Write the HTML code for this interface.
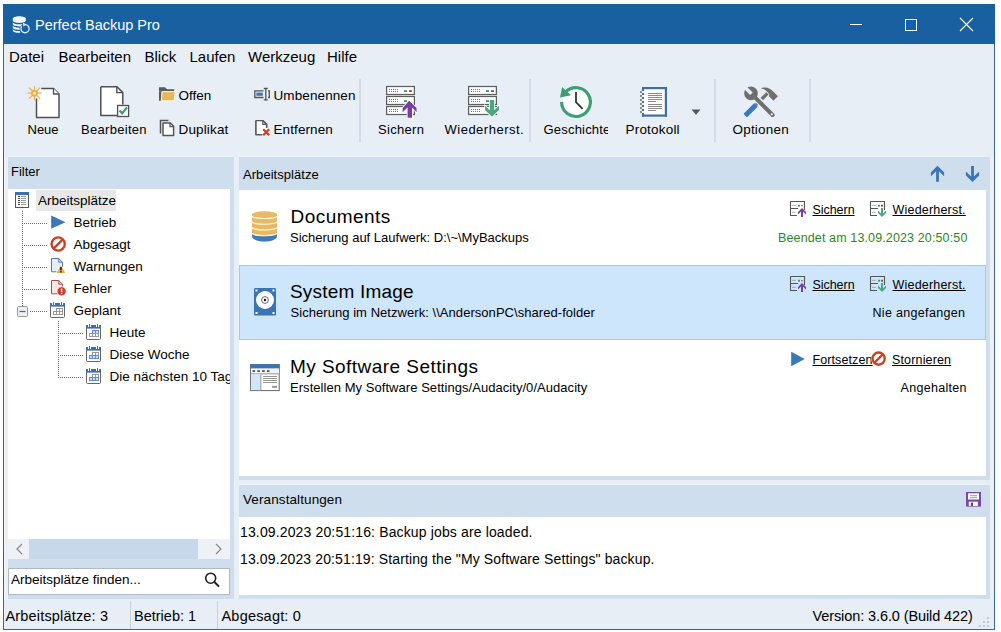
<!DOCTYPE html>
<html><head><meta charset="utf-8"><style>
html,body{margin:0;padding:0;width:1001px;height:632px;overflow:hidden;background:#fff}
body{position:relative;font-family:"Liberation Sans",sans-serif}
.t{position:absolute;white-space:nowrap;line-height:1}
.r{position:absolute;display:block}
u{text-decoration:underline;text-decoration-thickness:1px;text-underline-offset:1px}
</style></head><body>
<div class="r" style="left:3px;top:4px;width:992px;height:626px;background:#33699a;"></div>
<div class="r" style="left:3px;top:4px;width:992px;height:40px;background:#1860a0;"></div>
<div class="r" style="left:4px;top:44px;width:990px;height:585px;background:#e7eef6;"></div>
<div class="r" style="left:4px;top:157px;width:4px;height:442px;background:#eef0f3;"></div>
<div class="r" style="left:990px;top:157px;width:4px;height:442px;background:#eef0f3;"></div>
<svg class="r" style="left:11px;top:14px;" width="20" height="20" viewBox="0 0 20 20">
<path d="M1.8 4.6C1.8 3.2 4.7 2.2 8.3 2.2S14.8 3.2 14.8 4.6V6.6C14.8 8 11.9 9 8.3 9S1.8 8 1.8 6.6Z" fill="#f2f8ff"/>
<path d="M1.8 7.9C1.8 9.3 4.7 10.2 8.3 10.2C9.5 10.2 10.6 10.1 11.6 9.9L9.6 12.4C9.2 12.5 8.7 12.5 8.3 12.5C4.7 12.5 1.8 11.5 1.8 10.1Z" fill="#f2f8ff"/>
<path d="M1.8 11.3C1.8 12.7 4.7 13.7 8.3 13.7L8.6 13.7C8.5 14.3 8.5 15.2 8.6 15.9L8.3 15.9C4.7 15.9 1.8 14.9 1.8 13.5Z" fill="#f2f8ff"/>
<path d="M1.8 14.7C1.8 16.1 4.7 17.1 8.3 17.1L9 17.1L9.4 18.7C9 18.8 8.7 18.8 8.3 18.8C4.7 18.8 1.8 17.8 1.8 16.4Z" fill="#f2f8ff"/>
<path d="M14.6 10.6A4.1 4.1 0 1 1 10.6 12.4" fill="none" stroke="#d4eaff" stroke-width="1.3"/>
<path d="M11.8 8.6L15.6 10.6L12.4 12.6Z" fill="#d4eaff"/>
</svg>
<div class="t" style="left:35px;top:18px;font-size:14.5px;color:#fff;">Perfect Backup Pro</div>
<div class="r" style="left:850px;top:24px;width:12px;height:1px;background:#fff;"></div>
<svg class="r" style="left:904px;top:18px;" width="14" height="14" viewBox="0 0 14 14"><rect x="1.5" y="1.5" width="11" height="11" fill="none" stroke="#fff" stroke-width="1"/></svg>
<svg class="r" style="left:959px;top:17px;" width="15" height="15" viewBox="0 0 15 15"><path d="M1 1L14 14M14 1L1 14" stroke="#fff" stroke-width="1.1"/></svg>
<div class="t" style="left:9px;top:49px;font-size:15px;color:#000;">Datei</div>
<div class="t" style="left:58.5px;top:49px;font-size:15px;color:#000;">Bearbeiten</div>
<div class="t" style="left:144.5px;top:49px;font-size:15px;color:#000;">Blick</div>
<div class="t" style="left:189.5px;top:49px;font-size:15px;color:#000;">Laufen</div>
<div class="t" style="left:248px;top:49px;font-size:15px;color:#000;">Werkzeug</div>
<div class="t" style="left:327px;top:49px;font-size:15px;color:#000;">Hilfe</div>
<div class="r" style="left:359px;top:79px;width:2px;height:63px;background:#d2dce8;"></div>
<div class="r" style="left:529px;top:79px;width:2px;height:63px;background:#d2dce8;"></div>
<div class="r" style="left:714px;top:79px;width:2px;height:63px;background:#d2dce8;"></div>
<div class="r" style="left:809px;top:79px;width:2px;height:63px;background:#d2dce8;"></div>
<svg class="r" style="left:26px;top:84px;" width="36" height="36" viewBox="0 0 36 36">
<path d="M10.5 4.5H27.5L33 10V33.5H10.5Z" fill="#fff"/>
<path d="M15.2 4.5H27.5L33 10V33.5H10.5V14.6" fill="none" stroke="#505050" stroke-width="1.5" stroke-linejoin="round"/>
<path d="M27.5 4.5V10H33" fill="#fff" stroke="#505050" stroke-width="1.3"/>
<g stroke="#eeae4a" stroke-width="1.2" stroke-linecap="round">
<path d="M8.5 2.6V15.8M1.9 9.2H15.1M3.3 4L13.7 14.4M13.7 4L3.3 14.4"/>
</g>
<circle cx="8.5" cy="9.2" r="3.4" fill="#efae48"/><circle cx="8.5" cy="9.2" r="1.5" fill="#ffe8b8"/>
</svg>
<div class="t" style="left:27.5px;top:123px;font-size:13px;color:#000;">Neue</div>
<svg class="r" style="left:96px;top:82px;" width="36" height="38" viewBox="0 0 36 38">
<path d="M4.8 4.8H21L26.8 10.6V22H22V33.5H4.8Z" fill="#fff"/>
<path d="M4.8 4.8H21L26.8 10.6V22.5M21 33.5H4.8V4.8" fill="none" stroke="#505050" stroke-width="1.5" stroke-linejoin="round"/>
<path d="M20.8 4.8V10.6H26.8" fill="none" stroke="#505050" stroke-width="1.4"/>
<rect x="21.6" y="23.5" width="11" height="11" fill="#fff" stroke="#505050" stroke-width="1.3"/>
<path d="M23.5 28.5L26.2 31.4L31 25.4" fill="none" stroke="#3a9a6a" stroke-width="2.2"/>
</svg>
<div class="t" style="left:81px;top:123px;font-size:13px;color:#000;letter-spacing:0.3px">Bearbeiten</div>
<svg class="r" style="left:157px;top:85px;" width="20" height="18" viewBox="0 0 20 18">
<path d="M2 2.2H8L10 4.2H17.2V6.8H2Z" fill="#5b5b5b"/>
<path d="M2 2.2V15.8H4.5V6.8H2Z" fill="#5b5b5b"/>
<path d="M5.2 6.6H18.2L17.2 15.8H4.2Z" fill="#e9b55e" stroke="#fff" stroke-width="0.9"/>
</svg>
<div class="t" style="left:178.5px;top:89px;font-size:13.5px;color:#000;">Offen</div>
<svg class="r" style="left:157px;top:117px;" width="20" height="21" viewBox="0 0 20 21">
<path d="M3.5 16.5V3.5H11.5" fill="none" stroke="#555" stroke-width="1.5"/>
<path d="M6 6H13.3L16.6 9.3V18.6H6Z" fill="#fff" stroke="#555" stroke-width="1.5" stroke-linejoin="round"/>
<path d="M13 6V9.6H16.6" fill="none" stroke="#555" stroke-width="1.3"/>
</svg>
<div class="t" style="left:178.5px;top:123px;font-size:13.5px;color:#000;letter-spacing:0.15px">Duplikat</div>
<svg class="r" style="left:252px;top:86px;" width="20" height="16" viewBox="0 0 20 16">
<path d="M11.5 4.8H2.8V11.5H11.5" fill="none" stroke="#555" stroke-width="1.3"/>
<rect x="4.4" y="6.6" width="6.4" height="3.2" fill="#3d74b4"/>
<path d="M13.8 2.5V13.8M11.8 2.5H15.8M11.8 13.8H15.8" stroke="#555" stroke-width="1.3"/>
<path d="M16 4.8H17.3V11.5H16" fill="none" stroke="#555" stroke-width="1.3"/>
</svg>
<div class="t" style="left:273.5px;top:89px;font-size:13.5px;color:#000;letter-spacing:0.1px">Umbenennen</div>
<svg class="r" style="left:253px;top:118px;" width="20" height="20" viewBox="0 0 20 20">
<path d="M3 2.6H9.8L13.6 6.4V9.5M9 16.6H3V2.6" fill="#fff" stroke="#555" stroke-width="1.4" stroke-linejoin="round"/>
<path d="M3 2.6H9.8L13.6 6.4V16.6H3Z" fill="#fff"/>
<path d="M3 2.6H9.8L13.6 6.4V10M9.5 16.6H3V2.6" fill="none" stroke="#555" stroke-width="1.4"/>
<path d="M9.8 2.6V6.4H13.6" fill="none" stroke="#555" stroke-width="1.2"/>
<path d="M10.2 11.2L16.2 17.2M16.2 11.2L10.2 17.2" stroke="#fff" stroke-width="3.4"/><path d="M10.2 11.2L16.2 17.2M16.2 11.2L10.2 17.2" stroke="#cc3a20" stroke-width="2.2"/>
</svg>
<div class="t" style="left:273.5px;top:123px;font-size:13.5px;color:#000;letter-spacing:0.1px">Entfernen</div>
<svg class="r" style="left:382px;top:82px;" width="38" height="38" viewBox="0 0 38 38"><rect x="4.6" y="4.5" width="27.8" height="8" fill="#fff" stroke="#5f5f5f" stroke-width="1.25"/><rect x="7" y="7" width="1" height="1" fill="#777"/><rect x="9" y="7" width="1" height="1" fill="#777"/><rect x="11" y="7" width="1" height="1" fill="#777"/><rect x="13" y="7" width="1" height="1" fill="#777"/><rect x="15" y="7" width="1" height="1" fill="#777"/><rect x="7" y="9" width="1" height="1" fill="#777"/><rect x="9" y="9" width="1" height="1" fill="#777"/><rect x="11" y="9" width="1" height="1" fill="#777"/><rect x="13" y="9" width="1" height="1" fill="#777"/><rect x="15" y="9" width="1" height="1" fill="#777"/><rect x="4.6" y="14.5" width="27.8" height="8" fill="#fff" stroke="#5f5f5f" stroke-width="1.25"/><rect x="7" y="17" width="1" height="1" fill="#777"/><rect x="9" y="17" width="1" height="1" fill="#777"/><rect x="11" y="17" width="1" height="1" fill="#777"/><rect x="13" y="17" width="1" height="1" fill="#777"/><rect x="15" y="17" width="1" height="1" fill="#777"/><rect x="7" y="19" width="1" height="1" fill="#777"/><rect x="9" y="19" width="1" height="1" fill="#777"/><rect x="11" y="19" width="1" height="1" fill="#777"/><rect x="13" y="19" width="1" height="1" fill="#777"/><rect x="15" y="19" width="1" height="1" fill="#777"/><rect x="4.6" y="24.5" width="27.8" height="8" fill="#fff" stroke="#5f5f5f" stroke-width="1.25"/><rect x="7" y="27" width="1" height="1" fill="#777"/><rect x="9" y="27" width="1" height="1" fill="#777"/><rect x="11" y="27" width="1" height="1" fill="#777"/><rect x="13" y="27" width="1" height="1" fill="#777"/><rect x="15" y="27" width="1" height="1" fill="#777"/><rect x="7" y="29" width="1" height="1" fill="#777"/><rect x="9" y="29" width="1" height="1" fill="#777"/><rect x="11" y="29" width="1" height="1" fill="#777"/><rect x="13" y="29" width="1" height="1" fill="#777"/><rect x="15" y="29" width="1" height="1" fill="#777"/><rect x="22" y="8.2" width="3" height="1.8" fill="#3a9a6a"/><rect x="27" y="8.2" width="3" height="1.8" fill="#c2402a"/><rect x="22" y="18.2" width="3" height="1.8" fill="#3a9a6a"/><path d="M27.1 18.8L34.6 26V30.2L30 25.6V35.8H25.6V25.6L20.6 30.2V26Z" fill="#fff" stroke="#fff" stroke-width="1.6"/><path d="M27.1 18.8L34.6 26V30.2L30 25.6V35.8H25.6V25.6L20.6 30.2V26Z" fill="#7a3ea3"/></svg>
<div class="t" style="left:378px;top:123px;font-size:13px;color:#000;letter-spacing:0.3px">Sichern</div>
<svg class="r" style="left:464px;top:82px;" width="38" height="38" viewBox="0 0 38 38"><rect x="4.6" y="4.5" width="27.8" height="8" fill="#fff" stroke="#5f5f5f" stroke-width="1.25"/><rect x="7" y="7" width="1" height="1" fill="#777"/><rect x="9" y="7" width="1" height="1" fill="#777"/><rect x="11" y="7" width="1" height="1" fill="#777"/><rect x="13" y="7" width="1" height="1" fill="#777"/><rect x="15" y="7" width="1" height="1" fill="#777"/><rect x="7" y="9" width="1" height="1" fill="#777"/><rect x="9" y="9" width="1" height="1" fill="#777"/><rect x="11" y="9" width="1" height="1" fill="#777"/><rect x="13" y="9" width="1" height="1" fill="#777"/><rect x="15" y="9" width="1" height="1" fill="#777"/><rect x="4.6" y="14.5" width="27.8" height="8" fill="#fff" stroke="#5f5f5f" stroke-width="1.25"/><rect x="7" y="17" width="1" height="1" fill="#777"/><rect x="9" y="17" width="1" height="1" fill="#777"/><rect x="11" y="17" width="1" height="1" fill="#777"/><rect x="13" y="17" width="1" height="1" fill="#777"/><rect x="15" y="17" width="1" height="1" fill="#777"/><rect x="7" y="19" width="1" height="1" fill="#777"/><rect x="9" y="19" width="1" height="1" fill="#777"/><rect x="11" y="19" width="1" height="1" fill="#777"/><rect x="13" y="19" width="1" height="1" fill="#777"/><rect x="15" y="19" width="1" height="1" fill="#777"/><rect x="4.6" y="24.5" width="27.8" height="8" fill="#fff" stroke="#5f5f5f" stroke-width="1.25"/><rect x="7" y="27" width="1" height="1" fill="#777"/><rect x="9" y="27" width="1" height="1" fill="#777"/><rect x="11" y="27" width="1" height="1" fill="#777"/><rect x="13" y="27" width="1" height="1" fill="#777"/><rect x="15" y="27" width="1" height="1" fill="#777"/><rect x="7" y="29" width="1" height="1" fill="#777"/><rect x="9" y="29" width="1" height="1" fill="#777"/><rect x="11" y="29" width="1" height="1" fill="#777"/><rect x="13" y="29" width="1" height="1" fill="#777"/><rect x="15" y="29" width="1" height="1" fill="#777"/><rect x="22" y="8.2" width="3" height="1.8" fill="#3a9a6a"/><rect x="27" y="8.2" width="3" height="1.8" fill="#c2402a"/><rect x="22" y="18.2" width="3" height="1.8" fill="#3a9a6a"/><path d="M25.8 18H30.2V28.2L35 23.8V28L28 34.8L21 28V23.8L25.8 28.2Z" fill="#fff" stroke="#fff" stroke-width="1.6"/><path d="M25.8 18H30.2V28.2L35 23.8V28L28 34.8L21 28V23.8L25.8 28.2Z" fill="#4aa87e"/></svg>
<div class="t" style="left:444.5px;top:123px;font-size:13px;color:#000;letter-spacing:0.5px">Wiederherst.</div>
<svg class="r" style="left:555px;top:82px;" width="40" height="40" viewBox="0 0 40 40">
<circle cx="21" cy="20" r="13" fill="#fff"/><path d="M10.5 10.2A14.4 14.4 0 1 1 6.6 20" fill="none" stroke="#3c9f72" stroke-width="3.1"/>
<path d="M7.2 5L5 15.6L16 13.2Z" fill="#3c9f72"/>
<path d="M21 10V20.2L27.6 26.8" fill="none" stroke="#333" stroke-width="1.8"/>
</svg>
<div class="t" style="left:543.5px;top:123px;font-size:13px;color:#000;width:64px;overflow:hidden;letter-spacing:0.2px">Geschichte</div>
<svg class="r" style="left:636px;top:84px;" width="34" height="36" viewBox="0 0 34 36">
<rect x="6" y="3" width="25" height="30" fill="#fff"/>
<rect x="6" y="3" width="25" height="2.2" fill="#3f6ea6"/>
<rect x="28.8" y="3" width="2.2" height="29.7" fill="#3f6ea6"/>
<rect x="6" y="30.5" width="25" height="2.2" fill="#3f6ea6"/>
<rect x="6" y="3" width="2" height="4" fill="#3f6ea6"/><rect x="6" y="31" width="2" height="1.7" fill="#3f6ea6"/>
<rect x="4" y="7" width="2" height="2" fill="#8a8a8a"/><rect x="6" y="9" width="2" height="2" fill="#3f6ea6"/><rect x="4" y="11" width="2" height="2" fill="#8a8a8a"/><rect x="6" y="13" width="2" height="2" fill="#3f6ea6"/><rect x="4" y="15" width="2" height="2" fill="#8a8a8a"/><rect x="6" y="17" width="2" height="2" fill="#3f6ea6"/><rect x="4" y="19" width="2" height="2" fill="#8a8a8a"/><rect x="6" y="21" width="2" height="2" fill="#3f6ea6"/><rect x="4" y="23" width="2" height="2" fill="#8a8a8a"/><rect x="6" y="25" width="2" height="2" fill="#3f6ea6"/><rect x="4" y="27" width="2" height="2" fill="#8a8a8a"/><rect x="6" y="29" width="2" height="2" fill="#3f6ea6"/>
<g fill="#888">
<rect x="12" y="9" width="14" height="1"/><rect x="12" y="11" width="14" height="1"/><rect x="12" y="13" width="14" height="1"/><rect x="12" y="15" width="14" height="1"/><rect x="12" y="17" width="8" height="1"/>
<rect x="12" y="20" width="14" height="1"/><rect x="12" y="22" width="14" height="1"/><rect x="12" y="24" width="14" height="1"/><rect x="12" y="26" width="8" height="1"/>
</g>
</svg>
<div class="t" style="left:625.5px;top:123px;font-size:13.5px;color:#000;letter-spacing:0.2px">Protokoll</div>
<svg class="r" style="left:690px;top:108px;" width="12" height="8" viewBox="0 0 12 8"><path d="M1.5 1.5H10.5L6 6.8Z" fill="#555"/></svg>
<svg class="r" style="left:742px;top:84px;" width="38" height="36" viewBox="0 0 38 36">
<g transform="translate(27.9 6.9) rotate(45)" fill="#6f6f6f">
<path d="M3 -1.8C-2 -2.4 -6 -0.6 -8.3 4.6C-5 2.4 -1 2.2 3 3Z"/>
<rect x="2.6" y="-1.9" width="6.8" height="6.4" rx="0.6"/>
<rect x="-1.7" y="3.5" width="3.4" height="8"/>
<rect x="-1.5" y="17.4" width="3" height="2.2"/>
<rect x="-2.5" y="19.6" width="5" height="15.4" rx="1" fill="#3a78c0"/>
</g>
<g transform="translate(9 9.4) rotate(-45)">
<circle cx="0" cy="0" r="7.6" fill="#e7eef6"/>
<rect x="-3" y="0" width="6" height="33.5" rx="3" fill="#e7eef6"/>
<circle cx="0" cy="0" r="6.8" fill="#6f6f6f"/>
<rect x="-2" y="0" width="4" height="32.5" rx="2" fill="#6f6f6f"/>
<rect x="-1.8" y="-8" width="3.6" height="8.6" fill="#e7eef6"/>
<rect x="-0.9" y="28.6" width="1.8" height="1.8" fill="#fff"/>
</g>
</svg>
<div class="t" style="left:732.5px;top:123px;font-size:13.5px;color:#000;letter-spacing:0.2px">Optionen</div>
<div class="r" style="left:8px;top:157px;width:226px;height:442px;background:#cedeec;"></div>
<div class="t" style="left:11px;top:165px;font-size:13px;color:#000;">Filter</div>
<div class="r" style="left:8px;top:189px;width:222px;height:350px;background:#fff;"></div>
<div class="r" style="left:36px;top:190px;width:80px;height:21px;background:#e8e8e8;"></div>
<div class="t" style="left:38px;top:194px;font-size:13.5px;color:#000;">Arbeitsplätze</div>
<div class="r" style="left:22px;top:211px;width:1px;height:1px;background:#6e6e6e;"></div>
<div class="r" style="left:22px;top:213px;width:1px;height:1px;background:#6e6e6e;"></div>
<div class="r" style="left:22px;top:215px;width:1px;height:1px;background:#6e6e6e;"></div>
<div class="r" style="left:22px;top:217px;width:1px;height:1px;background:#6e6e6e;"></div>
<div class="r" style="left:22px;top:219px;width:1px;height:1px;background:#6e6e6e;"></div>
<div class="r" style="left:22px;top:221px;width:1px;height:1px;background:#6e6e6e;"></div>
<div class="r" style="left:22px;top:223px;width:1px;height:1px;background:#6e6e6e;"></div>
<div class="r" style="left:22px;top:225px;width:1px;height:1px;background:#6e6e6e;"></div>
<div class="r" style="left:22px;top:227px;width:1px;height:1px;background:#6e6e6e;"></div>
<div class="r" style="left:22px;top:229px;width:1px;height:1px;background:#6e6e6e;"></div>
<div class="r" style="left:22px;top:231px;width:1px;height:1px;background:#6e6e6e;"></div>
<div class="r" style="left:22px;top:233px;width:1px;height:1px;background:#6e6e6e;"></div>
<div class="r" style="left:22px;top:235px;width:1px;height:1px;background:#6e6e6e;"></div>
<div class="r" style="left:22px;top:237px;width:1px;height:1px;background:#6e6e6e;"></div>
<div class="r" style="left:22px;top:239px;width:1px;height:1px;background:#6e6e6e;"></div>
<div class="r" style="left:22px;top:241px;width:1px;height:1px;background:#6e6e6e;"></div>
<div class="r" style="left:22px;top:243px;width:1px;height:1px;background:#6e6e6e;"></div>
<div class="r" style="left:22px;top:245px;width:1px;height:1px;background:#6e6e6e;"></div>
<div class="r" style="left:22px;top:247px;width:1px;height:1px;background:#6e6e6e;"></div>
<div class="r" style="left:22px;top:249px;width:1px;height:1px;background:#6e6e6e;"></div>
<div class="r" style="left:22px;top:251px;width:1px;height:1px;background:#6e6e6e;"></div>
<div class="r" style="left:22px;top:253px;width:1px;height:1px;background:#6e6e6e;"></div>
<div class="r" style="left:22px;top:255px;width:1px;height:1px;background:#6e6e6e;"></div>
<div class="r" style="left:22px;top:257px;width:1px;height:1px;background:#6e6e6e;"></div>
<div class="r" style="left:22px;top:259px;width:1px;height:1px;background:#6e6e6e;"></div>
<div class="r" style="left:22px;top:261px;width:1px;height:1px;background:#6e6e6e;"></div>
<div class="r" style="left:22px;top:263px;width:1px;height:1px;background:#6e6e6e;"></div>
<div class="r" style="left:22px;top:265px;width:1px;height:1px;background:#6e6e6e;"></div>
<div class="r" style="left:22px;top:267px;width:1px;height:1px;background:#6e6e6e;"></div>
<div class="r" style="left:22px;top:269px;width:1px;height:1px;background:#6e6e6e;"></div>
<div class="r" style="left:22px;top:271px;width:1px;height:1px;background:#6e6e6e;"></div>
<div class="r" style="left:22px;top:273px;width:1px;height:1px;background:#6e6e6e;"></div>
<div class="r" style="left:22px;top:275px;width:1px;height:1px;background:#6e6e6e;"></div>
<div class="r" style="left:22px;top:277px;width:1px;height:1px;background:#6e6e6e;"></div>
<div class="r" style="left:22px;top:279px;width:1px;height:1px;background:#6e6e6e;"></div>
<div class="r" style="left:22px;top:281px;width:1px;height:1px;background:#6e6e6e;"></div>
<div class="r" style="left:22px;top:283px;width:1px;height:1px;background:#6e6e6e;"></div>
<div class="r" style="left:22px;top:285px;width:1px;height:1px;background:#6e6e6e;"></div>
<div class="r" style="left:22px;top:287px;width:1px;height:1px;background:#6e6e6e;"></div>
<div class="r" style="left:22px;top:289px;width:1px;height:1px;background:#6e6e6e;"></div>
<div class="r" style="left:22px;top:291px;width:1px;height:1px;background:#6e6e6e;"></div>
<div class="r" style="left:22px;top:293px;width:1px;height:1px;background:#6e6e6e;"></div>
<div class="r" style="left:22px;top:295px;width:1px;height:1px;background:#6e6e6e;"></div>
<div class="r" style="left:22px;top:297px;width:1px;height:1px;background:#6e6e6e;"></div>
<div class="r" style="left:22px;top:299px;width:1px;height:1px;background:#6e6e6e;"></div>
<div class="r" style="left:22px;top:301px;width:1px;height:1px;background:#6e6e6e;"></div>
<div class="r" style="left:22px;top:303px;width:1px;height:1px;background:#6e6e6e;"></div>
<div class="r" style="left:22px;top:305px;width:1px;height:1px;background:#6e6e6e;"></div>
<div class="r" style="left:22px;top:307px;width:1px;height:1px;background:#6e6e6e;"></div>
<div class="r" style="left:22px;top:309px;width:1px;height:1px;background:#6e6e6e;"></div>
<div class="r" style="left:24px;top:223px;width:1px;height:1px;background:#6e6e6e;"></div>
<div class="r" style="left:26px;top:223px;width:1px;height:1px;background:#6e6e6e;"></div>
<div class="r" style="left:28px;top:223px;width:1px;height:1px;background:#6e6e6e;"></div>
<div class="r" style="left:30px;top:223px;width:1px;height:1px;background:#6e6e6e;"></div>
<div class="r" style="left:32px;top:223px;width:1px;height:1px;background:#6e6e6e;"></div>
<div class="r" style="left:34px;top:223px;width:1px;height:1px;background:#6e6e6e;"></div>
<div class="r" style="left:36px;top:223px;width:1px;height:1px;background:#6e6e6e;"></div>
<div class="r" style="left:38px;top:223px;width:1px;height:1px;background:#6e6e6e;"></div>
<div class="r" style="left:40px;top:223px;width:1px;height:1px;background:#6e6e6e;"></div>
<div class="r" style="left:42px;top:223px;width:1px;height:1px;background:#6e6e6e;"></div>
<div class="r" style="left:44px;top:223px;width:1px;height:1px;background:#6e6e6e;"></div>
<div class="r" style="left:46px;top:223px;width:1px;height:1px;background:#6e6e6e;"></div>
<div class="r" style="left:24px;top:245px;width:1px;height:1px;background:#6e6e6e;"></div>
<div class="r" style="left:26px;top:245px;width:1px;height:1px;background:#6e6e6e;"></div>
<div class="r" style="left:28px;top:245px;width:1px;height:1px;background:#6e6e6e;"></div>
<div class="r" style="left:30px;top:245px;width:1px;height:1px;background:#6e6e6e;"></div>
<div class="r" style="left:32px;top:245px;width:1px;height:1px;background:#6e6e6e;"></div>
<div class="r" style="left:34px;top:245px;width:1px;height:1px;background:#6e6e6e;"></div>
<div class="r" style="left:36px;top:245px;width:1px;height:1px;background:#6e6e6e;"></div>
<div class="r" style="left:38px;top:245px;width:1px;height:1px;background:#6e6e6e;"></div>
<div class="r" style="left:40px;top:245px;width:1px;height:1px;background:#6e6e6e;"></div>
<div class="r" style="left:42px;top:245px;width:1px;height:1px;background:#6e6e6e;"></div>
<div class="r" style="left:44px;top:245px;width:1px;height:1px;background:#6e6e6e;"></div>
<div class="r" style="left:46px;top:245px;width:1px;height:1px;background:#6e6e6e;"></div>
<div class="r" style="left:24px;top:267px;width:1px;height:1px;background:#6e6e6e;"></div>
<div class="r" style="left:26px;top:267px;width:1px;height:1px;background:#6e6e6e;"></div>
<div class="r" style="left:28px;top:267px;width:1px;height:1px;background:#6e6e6e;"></div>
<div class="r" style="left:30px;top:267px;width:1px;height:1px;background:#6e6e6e;"></div>
<div class="r" style="left:32px;top:267px;width:1px;height:1px;background:#6e6e6e;"></div>
<div class="r" style="left:34px;top:267px;width:1px;height:1px;background:#6e6e6e;"></div>
<div class="r" style="left:36px;top:267px;width:1px;height:1px;background:#6e6e6e;"></div>
<div class="r" style="left:38px;top:267px;width:1px;height:1px;background:#6e6e6e;"></div>
<div class="r" style="left:40px;top:267px;width:1px;height:1px;background:#6e6e6e;"></div>
<div class="r" style="left:42px;top:267px;width:1px;height:1px;background:#6e6e6e;"></div>
<div class="r" style="left:44px;top:267px;width:1px;height:1px;background:#6e6e6e;"></div>
<div class="r" style="left:46px;top:267px;width:1px;height:1px;background:#6e6e6e;"></div>
<div class="r" style="left:24px;top:289px;width:1px;height:1px;background:#6e6e6e;"></div>
<div class="r" style="left:26px;top:289px;width:1px;height:1px;background:#6e6e6e;"></div>
<div class="r" style="left:28px;top:289px;width:1px;height:1px;background:#6e6e6e;"></div>
<div class="r" style="left:30px;top:289px;width:1px;height:1px;background:#6e6e6e;"></div>
<div class="r" style="left:32px;top:289px;width:1px;height:1px;background:#6e6e6e;"></div>
<div class="r" style="left:34px;top:289px;width:1px;height:1px;background:#6e6e6e;"></div>
<div class="r" style="left:36px;top:289px;width:1px;height:1px;background:#6e6e6e;"></div>
<div class="r" style="left:38px;top:289px;width:1px;height:1px;background:#6e6e6e;"></div>
<div class="r" style="left:40px;top:289px;width:1px;height:1px;background:#6e6e6e;"></div>
<div class="r" style="left:42px;top:289px;width:1px;height:1px;background:#6e6e6e;"></div>
<div class="r" style="left:44px;top:289px;width:1px;height:1px;background:#6e6e6e;"></div>
<div class="r" style="left:46px;top:289px;width:1px;height:1px;background:#6e6e6e;"></div>
<div class="r" style="left:30px;top:311px;width:1px;height:1px;background:#6e6e6e;"></div>
<div class="r" style="left:32px;top:311px;width:1px;height:1px;background:#6e6e6e;"></div>
<div class="r" style="left:34px;top:311px;width:1px;height:1px;background:#6e6e6e;"></div>
<div class="r" style="left:36px;top:311px;width:1px;height:1px;background:#6e6e6e;"></div>
<div class="r" style="left:38px;top:311px;width:1px;height:1px;background:#6e6e6e;"></div>
<div class="r" style="left:40px;top:311px;width:1px;height:1px;background:#6e6e6e;"></div>
<div class="r" style="left:42px;top:311px;width:1px;height:1px;background:#6e6e6e;"></div>
<div class="r" style="left:44px;top:311px;width:1px;height:1px;background:#6e6e6e;"></div>
<div class="r" style="left:46px;top:311px;width:1px;height:1px;background:#6e6e6e;"></div>
<div class="r" style="left:58px;top:321px;width:1px;height:1px;background:#6e6e6e;"></div>
<div class="r" style="left:58px;top:323px;width:1px;height:1px;background:#6e6e6e;"></div>
<div class="r" style="left:58px;top:325px;width:1px;height:1px;background:#6e6e6e;"></div>
<div class="r" style="left:58px;top:327px;width:1px;height:1px;background:#6e6e6e;"></div>
<div class="r" style="left:58px;top:329px;width:1px;height:1px;background:#6e6e6e;"></div>
<div class="r" style="left:58px;top:331px;width:1px;height:1px;background:#6e6e6e;"></div>
<div class="r" style="left:58px;top:333px;width:1px;height:1px;background:#6e6e6e;"></div>
<div class="r" style="left:58px;top:335px;width:1px;height:1px;background:#6e6e6e;"></div>
<div class="r" style="left:58px;top:337px;width:1px;height:1px;background:#6e6e6e;"></div>
<div class="r" style="left:58px;top:339px;width:1px;height:1px;background:#6e6e6e;"></div>
<div class="r" style="left:58px;top:341px;width:1px;height:1px;background:#6e6e6e;"></div>
<div class="r" style="left:58px;top:343px;width:1px;height:1px;background:#6e6e6e;"></div>
<div class="r" style="left:58px;top:345px;width:1px;height:1px;background:#6e6e6e;"></div>
<div class="r" style="left:58px;top:347px;width:1px;height:1px;background:#6e6e6e;"></div>
<div class="r" style="left:58px;top:349px;width:1px;height:1px;background:#6e6e6e;"></div>
<div class="r" style="left:58px;top:351px;width:1px;height:1px;background:#6e6e6e;"></div>
<div class="r" style="left:58px;top:353px;width:1px;height:1px;background:#6e6e6e;"></div>
<div class="r" style="left:58px;top:355px;width:1px;height:1px;background:#6e6e6e;"></div>
<div class="r" style="left:58px;top:357px;width:1px;height:1px;background:#6e6e6e;"></div>
<div class="r" style="left:58px;top:359px;width:1px;height:1px;background:#6e6e6e;"></div>
<div class="r" style="left:58px;top:361px;width:1px;height:1px;background:#6e6e6e;"></div>
<div class="r" style="left:58px;top:363px;width:1px;height:1px;background:#6e6e6e;"></div>
<div class="r" style="left:58px;top:365px;width:1px;height:1px;background:#6e6e6e;"></div>
<div class="r" style="left:58px;top:367px;width:1px;height:1px;background:#6e6e6e;"></div>
<div class="r" style="left:58px;top:369px;width:1px;height:1px;background:#6e6e6e;"></div>
<div class="r" style="left:58px;top:371px;width:1px;height:1px;background:#6e6e6e;"></div>
<div class="r" style="left:58px;top:373px;width:1px;height:1px;background:#6e6e6e;"></div>
<div class="r" style="left:58px;top:375px;width:1px;height:1px;background:#6e6e6e;"></div>
<div class="r" style="left:58px;top:377px;width:1px;height:1px;background:#6e6e6e;"></div>
<div class="r" style="left:60px;top:333px;width:1px;height:1px;background:#6e6e6e;"></div>
<div class="r" style="left:62px;top:333px;width:1px;height:1px;background:#6e6e6e;"></div>
<div class="r" style="left:64px;top:333px;width:1px;height:1px;background:#6e6e6e;"></div>
<div class="r" style="left:66px;top:333px;width:1px;height:1px;background:#6e6e6e;"></div>
<div class="r" style="left:68px;top:333px;width:1px;height:1px;background:#6e6e6e;"></div>
<div class="r" style="left:70px;top:333px;width:1px;height:1px;background:#6e6e6e;"></div>
<div class="r" style="left:72px;top:333px;width:1px;height:1px;background:#6e6e6e;"></div>
<div class="r" style="left:74px;top:333px;width:1px;height:1px;background:#6e6e6e;"></div>
<div class="r" style="left:76px;top:333px;width:1px;height:1px;background:#6e6e6e;"></div>
<div class="r" style="left:78px;top:333px;width:1px;height:1px;background:#6e6e6e;"></div>
<div class="r" style="left:80px;top:333px;width:1px;height:1px;background:#6e6e6e;"></div>
<div class="r" style="left:82px;top:333px;width:1px;height:1px;background:#6e6e6e;"></div>
<div class="r" style="left:60px;top:355px;width:1px;height:1px;background:#6e6e6e;"></div>
<div class="r" style="left:62px;top:355px;width:1px;height:1px;background:#6e6e6e;"></div>
<div class="r" style="left:64px;top:355px;width:1px;height:1px;background:#6e6e6e;"></div>
<div class="r" style="left:66px;top:355px;width:1px;height:1px;background:#6e6e6e;"></div>
<div class="r" style="left:68px;top:355px;width:1px;height:1px;background:#6e6e6e;"></div>
<div class="r" style="left:70px;top:355px;width:1px;height:1px;background:#6e6e6e;"></div>
<div class="r" style="left:72px;top:355px;width:1px;height:1px;background:#6e6e6e;"></div>
<div class="r" style="left:74px;top:355px;width:1px;height:1px;background:#6e6e6e;"></div>
<div class="r" style="left:76px;top:355px;width:1px;height:1px;background:#6e6e6e;"></div>
<div class="r" style="left:78px;top:355px;width:1px;height:1px;background:#6e6e6e;"></div>
<div class="r" style="left:80px;top:355px;width:1px;height:1px;background:#6e6e6e;"></div>
<div class="r" style="left:82px;top:355px;width:1px;height:1px;background:#6e6e6e;"></div>
<div class="r" style="left:60px;top:377px;width:1px;height:1px;background:#6e6e6e;"></div>
<div class="r" style="left:62px;top:377px;width:1px;height:1px;background:#6e6e6e;"></div>
<div class="r" style="left:64px;top:377px;width:1px;height:1px;background:#6e6e6e;"></div>
<div class="r" style="left:66px;top:377px;width:1px;height:1px;background:#6e6e6e;"></div>
<div class="r" style="left:68px;top:377px;width:1px;height:1px;background:#6e6e6e;"></div>
<div class="r" style="left:70px;top:377px;width:1px;height:1px;background:#6e6e6e;"></div>
<div class="r" style="left:72px;top:377px;width:1px;height:1px;background:#6e6e6e;"></div>
<div class="r" style="left:74px;top:377px;width:1px;height:1px;background:#6e6e6e;"></div>
<div class="r" style="left:76px;top:377px;width:1px;height:1px;background:#6e6e6e;"></div>
<div class="r" style="left:78px;top:377px;width:1px;height:1px;background:#6e6e6e;"></div>
<div class="r" style="left:80px;top:377px;width:1px;height:1px;background:#6e6e6e;"></div>
<div class="r" style="left:82px;top:377px;width:1px;height:1px;background:#6e6e6e;"></div>
<svg class="r" style="left:16px;top:305px;" width="13" height="13" viewBox="0 0 13 13"><rect x="1.5" y="1.5" width="10" height="10" rx="1" fill="#eee" stroke="#999"/><path d="M3.5 6.5H9.5" stroke="#3a6ea5" stroke-width="1.2"/></svg>
<svg class="r" style="left:14px;top:191px;" width="16" height="18" viewBox="0 0 16 18">
<rect x="1.5" y="1.5" width="13" height="15" fill="#fff" stroke="#555" stroke-width="1"/>
<rect x="1" y="1" width="14" height="3" fill="#3d6fb0"/>
<g fill="#444"><rect x="4" y="5" width="2" height="1"/><rect x="4" y="7" width="2" height="1"/><rect x="4" y="9" width="2" height="1"/><rect x="4" y="11" width="2" height="1"/><rect x="4" y="13" width="2" height="1"/></g>
<g fill="#999"><rect x="7" y="5" width="5" height="1"/><rect x="7" y="7" width="5" height="1"/><rect x="7" y="9" width="5" height="1"/><rect x="7" y="11" width="5" height="1"/><rect x="7" y="13" width="5" height="1"/></g>
</svg>
<svg class="r" style="left:50px;top:214px;" width="18" height="17" viewBox="0 0 18 17"><path d="M1.2 1.6L15.5 8.2L1.2 14.8Z" fill="#3b78b8"/></svg>
<div class="t" style="left:73.5px;top:216px;font-size:13.5px;color:#000;">Betrieb</div>
<svg class="r" style="left:49px;top:235px;" width="19" height="19" viewBox="0 0 19 19"><circle cx="9.2" cy="9" r="6.6" fill="none" stroke="#c8412a" stroke-width="2.4"/><path d="M4.6 13.6L13.8 4.4" stroke="#c8412a" stroke-width="2.4"/></svg>
<div class="t" style="left:73.5px;top:238px;font-size:13.5px;color:#000;">Abgesagt</div>
<svg class="r" style="left:49px;top:256px;" width="19" height="19" viewBox="0 0 19 19">
<path d="M2.5 2.5H9.8L13.5 6.2V15.8H2.5Z" fill="#e3eefa" stroke="#4a78ac" stroke-width="1"/>
<path d="M9.8 2.5V6.2H13.5" fill="none" stroke="#4a78ac" stroke-width="1"/>
<path d="M11.8 8.5L17 17.6H6.6Z" fill="#e8b04e" stroke="#fff" stroke-width="0.8"/>
<rect x="11.2" y="11" width="1.4" height="3.4" fill="#111"/><rect x="11.2" y="15.2" width="1.4" height="1.3" fill="#111"/>
</svg>
<div class="t" style="left:73.5px;top:260px;font-size:13.5px;color:#000;">Warnungen</div>
<svg class="r" style="left:49px;top:278px;" width="19" height="19" viewBox="0 0 19 19">
<path d="M2.5 2.5H9.8L13.5 6.2V15.8H2.5Z" fill="#fbe6e6" stroke="#a35050" stroke-width="1"/>
<path d="M9.8 2.5V6.2H13.5" fill="none" stroke="#a35050" stroke-width="1"/>
<circle cx="12.6" cy="13.3" r="4.6" fill="#c8412a" stroke="#fff" stroke-width="0.8"/>
<rect x="11.9" y="10.6" width="1.4" height="3.4" fill="#fff"/><rect x="11.9" y="14.8" width="1.4" height="1.3" fill="#fff"/>
</svg>
<div class="t" style="left:73.5px;top:282px;font-size:13.5px;color:#000;">Fehler</div>
<svg class="r" style="left:49px;top:301px;" width="17" height="18" viewBox="0 0 17 18"><rect x="1.5" y="3.5" width="14" height="13" rx="1" fill="#fff" stroke="#666" stroke-width="1"/><rect x="1" y="2" width="15" height="3.6" fill="#3d6fb0"/><rect x="3" y="2" width="3" height="2" fill="#fff"/><rect x="11" y="2" width="3" height="2" fill="#fff"/><rect x="4" y="1" width="1" height="4" fill="#3d6fb0"/><rect x="12" y="1" width="1" height="4" fill="#3d6fb0"/><rect x="7.5" y="7.5" width="3" height="3" fill="#fff" stroke="#999" stroke-width="1"/><rect x="10.5" y="7.5" width="3" height="3" fill="#fff" stroke="#999" stroke-width="1"/><rect x="4.5" y="10.5" width="3" height="3" fill="#fff" stroke="#999" stroke-width="1"/><rect x="7.5" y="10.5" width="3" height="3" fill="#fff" stroke="#999" stroke-width="1"/><rect x="10.5" y="10.5" width="3" height="3" fill="#fff" stroke="#999" stroke-width="1"/></svg>
<div class="t" style="left:73.5px;top:304px;font-size:13.5px;color:#000;">Geplant</div>
<svg class="r" style="left:85px;top:323px;" width="17" height="18" viewBox="0 0 17 18"><rect x="1.5" y="3.5" width="14" height="13" rx="1" fill="#fff" stroke="#666" stroke-width="1"/><rect x="1" y="2" width="15" height="3.6" fill="#3d6fb0"/><rect x="3" y="2" width="3" height="2" fill="#fff"/><rect x="11" y="2" width="3" height="2" fill="#fff"/><rect x="4" y="1" width="1" height="4" fill="#3d6fb0"/><rect x="12" y="1" width="1" height="4" fill="#3d6fb0"/><rect x="7.5" y="7.5" width="3" height="3" fill="#cfe3f8" stroke="#5b8fd0" stroke-width="1"/><rect x="10.5" y="7.5" width="3" height="3" fill="#cfe3f8" stroke="#5b8fd0" stroke-width="1"/><rect x="4.5" y="10.5" width="3" height="3" fill="#fff" stroke="#999" stroke-width="1"/><rect x="7.5" y="10.5" width="3" height="3" fill="#fff" stroke="#999" stroke-width="1"/><rect x="10.5" y="10.5" width="3" height="3" fill="#fff" stroke="#999" stroke-width="1"/></svg>
<div class="t" style="left:109.5px;top:326px;font-size:13.5px;color:#000;">Heute</div>
<svg class="r" style="left:85px;top:345px;" width="17" height="18" viewBox="0 0 17 18"><rect x="1.5" y="3.5" width="14" height="13" rx="1" fill="#fff" stroke="#666" stroke-width="1"/><rect x="1" y="2" width="15" height="3.6" fill="#3d6fb0"/><rect x="3" y="2" width="3" height="2" fill="#fff"/><rect x="11" y="2" width="3" height="2" fill="#fff"/><rect x="4" y="1" width="1" height="4" fill="#3d6fb0"/><rect x="12" y="1" width="1" height="4" fill="#3d6fb0"/><rect x="7.5" y="7.5" width="3" height="3" fill="#fff" stroke="#999" stroke-width="1"/><rect x="10.5" y="7.5" width="3" height="3" fill="#fff" stroke="#999" stroke-width="1"/><rect x="4.5" y="10.5" width="3" height="3" fill="#cfe3f8" stroke="#5b8fd0" stroke-width="1"/><rect x="7.5" y="10.5" width="3" height="3" fill="#cfe3f8" stroke="#5b8fd0" stroke-width="1"/><rect x="10.5" y="10.5" width="3" height="3" fill="#cfe3f8" stroke="#5b8fd0" stroke-width="1"/></svg>
<div class="t" style="left:109.5px;top:348px;font-size:13.5px;color:#000;">Diese Woche</div>
<svg class="r" style="left:85px;top:367px;" width="17" height="18" viewBox="0 0 17 18"><rect x="1.5" y="3.5" width="14" height="13" rx="1" fill="#fff" stroke="#666" stroke-width="1"/><rect x="1" y="2" width="15" height="3.6" fill="#3d6fb0"/><rect x="3" y="2" width="3" height="2" fill="#fff"/><rect x="11" y="2" width="3" height="2" fill="#fff"/><rect x="4" y="1" width="1" height="4" fill="#3d6fb0"/><rect x="12" y="1" width="1" height="4" fill="#3d6fb0"/><rect x="7.5" y="7.5" width="3" height="3" fill="#fff" stroke="#999" stroke-width="1"/><rect x="10.5" y="7.5" width="3" height="3" fill="#fff" stroke="#999" stroke-width="1"/><rect x="4.5" y="10.5" width="3" height="3" fill="#cfe3f8" stroke="#5b8fd0" stroke-width="1"/><rect x="7.5" y="10.5" width="3" height="3" fill="#cfe3f8" stroke="#5b8fd0" stroke-width="1"/><rect x="10.5" y="10.5" width="3" height="3" fill="#cfe3f8" stroke="#5b8fd0" stroke-width="1"/></svg>
<div class="r" style="left:8px;top:360px;width:222px;height:30px;overflow:hidden">
<div class="t" style="left:101.5px;top:10px;font-size:13.5px;color:#000;">Die nächsten 10 Tage</div>
</div>
<div class="r" style="left:8px;top:539px;width:222px;height:20px;background:#eef2f7;"></div>
<div class="r" style="left:29px;top:539px;width:169px;height:20px;background:#c6d8e9;"></div>
<svg class="r" style="left:12px;top:541px;" width="14" height="16" viewBox="0 0 14 16"><path d="M10 3L5 8L10 13" fill="none" stroke="#888" stroke-width="1.2"/></svg>
<svg class="r" style="left:212px;top:541px;" width="14" height="16" viewBox="0 0 14 16"><path d="M4 3L9 8L4 13" fill="none" stroke="#888" stroke-width="1.2"/></svg>
<div class="r" style="left:8px;top:568px;width:222px;height:27px;background:#fff;box-sizing:border-box;border:1px solid #adb9c6"></div>
<div class="t" style="left:11px;top:573px;font-size:13.5px;color:#000;">Arbeitsplätze finden...</div>
<svg class="r" style="left:202px;top:570px;" width="22" height="22" viewBox="0 0 22 22"><circle cx="8.7" cy="8.2" r="5" fill="none" stroke="#222" stroke-width="1.6"/><path d="M12.2 11.8L17 16.6" stroke="#222" stroke-width="2"/></svg>
<div class="r" style="left:239px;top:157px;width:751px;height:323px;background:#cedeec;"></div>
<div class="t" style="left:243px;top:168px;font-size:13px;color:#000;letter-spacing:0.05px">Arbeitsplätze</div>
<svg class="r" style="left:928px;top:163px;" width="18" height="21" viewBox="0 0 18 21"><path d="M9.5 2.8L16.1 9.4V13.3L10.9 8.2V18.8H8.1V8.2L2.9 13.3V9.4Z" fill="#3b74b4"/></svg>
<svg class="r" style="left:963px;top:163px;" width="18" height="21" viewBox="0 0 18 21"><path d="M9.5 19L16.1 12.4V8.5L10.9 13.6V3H8.1V13.6L2.9 8.5V12.4Z" fill="#3b74b4"/></svg>
<div class="r" style="left:239px;top:190px;width:747px;height:286px;background:#fff;"></div>
<div class="r" style="left:239px;top:265px;width:747px;height:75px;background:#cde6fc;box-sizing:border-box;border:1px solid #a9c8e2"></div>
<svg class="r" style="left:250px;top:209px;" width="30" height="36" viewBox="0 0 30 36">
<path d="M2 5.2V27A12.5 5.6 0 0 0 27 27V5.2Z" fill="#e8b865"/>
<ellipse cx="14.5" cy="5.2" rx="12.5" ry="2.9" fill="#e8b865"/>
<path d="M2 24.6A12.5 2.6 0 0 0 27 24.6V27A12.5 5.6 0 0 1 2 27Z" fill="#3b7bc0"/>
<g fill="none" stroke="#fff6e0" stroke-width="1.1"><path d="M2 6.9A12.5 2.6 0 0 0 27 6.9"/><path d="M2 12.6A12.5 2.6 0 0 0 27 12.6"/><path d="M2 18.3A12.5 2.6 0 0 0 27 18.3"/><path d="M2 24A12.5 2.6 0 0 0 27 24"/></g>
</svg>
<div class="t" style="left:290.5px;top:207px;font-size:19px;color:#000;letter-spacing:0.45px">Documents</div>
<div class="t" style="left:290px;top:231px;font-size:13px;color:#000;letter-spacing:0px">Sicherung auf Laufwerk: D:\~\MyBackups</div>
<svg class="r" style="left:252px;top:286px;" width="26" height="32" viewBox="0 0 26 32">
<rect x="2" y="2" width="22" height="27.5" rx="1.2" fill="#3b74b4"/>
<circle cx="13" cy="14" r="9" fill="#fff"/>
<circle cx="13" cy="14" r="3.4" fill="none" stroke="#444" stroke-width="0.8"/>
<circle cx="13" cy="14" r="1.2" fill="#111"/>
<rect x="3.5" y="3.5" width="2" height="2" fill="#fff"/><rect x="20.5" y="3.5" width="2" height="2" fill="#fff"/>
<rect x="3.5" y="26" width="2" height="2" fill="#fff"/><rect x="20.5" y="26" width="2" height="2" fill="#fff"/>
</svg>
<div class="t" style="left:290px;top:282px;font-size:19px;color:#000;letter-spacing:0.2px">System Image</div>
<div class="t" style="left:290.5px;top:306px;font-size:13px;color:#000;letter-spacing:0.05px">Sicherung im Netzwerk: \\AndersonPC\shared-folder</div>
<svg class="r" style="left:248px;top:362px;" width="34" height="32" viewBox="0 0 34 32">
<rect x="2.6" y="2.6" width="28.6" height="26" fill="#fff" stroke="#666" stroke-width="1"/>
<rect x="2.2" y="2.2" width="29.4" height="4.4" fill="#3b74b4"/>
<rect x="3" y="6.6" width="27.8" height="4.8" fill="#f3f3f3"/>
<g fill="#555"><rect x="4.5" y="8.2" width="2.6" height="1.8"/><rect x="9.3" y="8.2" width="2.6" height="1.8"/><rect x="14.1" y="8.2" width="2.6" height="1.8"/><rect x="18.9" y="8.2" width="2.6" height="1.8"/></g>
<rect x="3" y="11.4" width="27.8" height="0.9" fill="#888"/>
<rect x="3.1" y="12.3" width="9.3" height="15.8" fill="#cfe6fb"/>
<rect x="12.4" y="12.3" width="0.9" height="16" fill="#888"/>
<g fill="#888"><rect x="15" y="14" width="14" height="0.9"/><rect x="15" y="16" width="14" height="0.9"/><rect x="15" y="18" width="14" height="0.9"/><rect x="15" y="20" width="14" height="0.9"/><rect x="24" y="23.8" width="5" height="2" fill="#999"/></g>
</svg>
<div class="t" style="left:290px;top:357px;font-size:19px;color:#000;letter-spacing:0.45px">My Software Settings</div>
<div class="t" style="left:290px;top:381px;font-size:13px;color:#000;letter-spacing:0.05px">Erstellen My Software Settings/Audacity/0/Audacity</div>
<svg class="r" style="left:786px;top:198px;" width="22" height="22" viewBox="0 0 22 22"><path d="M4.5 3.5H18.5V12" fill="none" stroke="#555" stroke-width="1.1"/><path d="M4.5 3.5V17.5H11M4.5 10.5H12" fill="none" stroke="#555" stroke-width="1.1"/><path d="M6.2 8L7.4 6.8L8.6 8L9.8 6.8" fill="none" stroke="#888" stroke-width="0.8"/><path d="M6.2 15L7.4 13.8L8.6 15L9.8 13.8" fill="none" stroke="#888" stroke-width="0.8"/><rect x="12" y="6.8" width="2" height="1.8" fill="#3a9a6a"/><rect x="15" y="7.2" width="2" height="1" fill="#b06050"/><path d="M16 10L20 14V16.5L17 13.6V19H15V13.6L12 16.5V14Z" fill="#7a3ea3"/></svg>
<div class="t" style="left:812.5px;top:204px;font-size:12.5px;color:#000;letter-spacing:-0.05px"><u>Sichern</u></div>
<svg class="r" style="left:866px;top:198px;" width="22" height="22" viewBox="0 0 22 22"><path d="M4.5 3.5H18.5V12" fill="none" stroke="#555" stroke-width="1.1"/><path d="M4.5 3.5V17.5H11M4.5 10.5H12" fill="none" stroke="#555" stroke-width="1.1"/><path d="M6.2 8L7.4 6.8L8.6 8L9.8 6.8" fill="none" stroke="#888" stroke-width="0.8"/><path d="M6.2 15L7.4 13.8L8.6 15L9.8 13.8" fill="none" stroke="#888" stroke-width="0.8"/><rect x="12" y="6.8" width="2" height="1.8" fill="#3a9a6a"/><rect x="15" y="6.8" width="2" height="1.8" fill="#a04040"/><path d="M15 10H17V15.5L20 12.6V15L16 19L12 15V12.6L15 15.5Z" fill="#4aa87e"/></svg>
<div class="t" style="left:892.5px;top:204px;font-size:12.5px;color:#000;letter-spacing:0.2px"><u>Wiederherst.</u></div>
<svg class="r" style="left:786px;top:273px;" width="22" height="22" viewBox="0 0 22 22"><path d="M4.5 3.5H18.5V12" fill="none" stroke="#555" stroke-width="1.1"/><path d="M4.5 3.5V17.5H11M4.5 10.5H12" fill="none" stroke="#555" stroke-width="1.1"/><path d="M6.2 8L7.4 6.8L8.6 8L9.8 6.8" fill="none" stroke="#888" stroke-width="0.8"/><path d="M6.2 15L7.4 13.8L8.6 15L9.8 13.8" fill="none" stroke="#888" stroke-width="0.8"/><rect x="12" y="6.8" width="2" height="1.8" fill="#3a9a6a"/><rect x="15" y="7.2" width="2" height="1" fill="#b06050"/><path d="M16 10L20 14V16.5L17 13.6V19H15V13.6L12 16.5V14Z" fill="#7a3ea3"/></svg>
<div class="t" style="left:812.5px;top:279px;font-size:12.5px;color:#000;letter-spacing:-0.05px"><u>Sichern</u></div>
<svg class="r" style="left:866px;top:273px;" width="22" height="22" viewBox="0 0 22 22"><path d="M4.5 3.5H18.5V12" fill="none" stroke="#555" stroke-width="1.1"/><path d="M4.5 3.5V17.5H11M4.5 10.5H12" fill="none" stroke="#555" stroke-width="1.1"/><path d="M6.2 8L7.4 6.8L8.6 8L9.8 6.8" fill="none" stroke="#888" stroke-width="0.8"/><path d="M6.2 15L7.4 13.8L8.6 15L9.8 13.8" fill="none" stroke="#888" stroke-width="0.8"/><rect x="12" y="6.8" width="2" height="1.8" fill="#3a9a6a"/><rect x="15" y="6.8" width="2" height="1.8" fill="#a04040"/><path d="M15 10H17V15.5L20 12.6V15L16 19L12 15V12.6L15 15.5Z" fill="#4aa87e"/></svg>
<div class="t" style="left:892.5px;top:279px;font-size:12.5px;color:#000;letter-spacing:0.2px"><u>Wiederherst.</u></div>
<div class="r" style="left:0px;top:0px;width:0px;height:0px;background:none;"></div>
<div class="t" style="left:778px;top:232px;font-size:12.5px;color:#2f8526;letter-spacing:0.13px">Beendet am 13.09.2023 20:50:50</div>
<div class="t" style="left:872.5px;top:307px;font-size:12.5px;color:#000;letter-spacing:0.32px">Nie angefangen</div>
<svg class="r" style="left:789px;top:350px;" width="18" height="18" viewBox="0 0 18 18"><path d="M2.2 1.8L15.8 9L2.2 16.2Z" fill="#3b78b8"/></svg>
<div class="t" style="left:812.5px;top:354px;font-size:12.5px;color:#000;letter-spacing:0.1px"><u>Fortsetzen</u></div>
<div class="t" style="left:892px;top:354px;font-size:12.5px;color:#000;letter-spacing:0.15px"><u>Stornieren</u></div>
<svg class="r" style="left:869px;top:349px;" width="19" height="19" viewBox="0 0 19 19"><circle cx="9.6" cy="9.6" r="7.6" fill="#fff"/><circle cx="9.6" cy="9.6" r="6.1" fill="none" stroke="#c8412a" stroke-width="2.4"/><path d="M5.2 14L14 5.2" stroke="#c8412a" stroke-width="2.4"/></svg>
<div class="t" style="left:900.5px;top:382px;font-size:12.5px;color:#000;letter-spacing:0.3px">Angehalten</div>
<div class="r" style="left:239px;top:485px;width:751px;height:114px;background:#cedeec;"></div>
<div class="t" style="left:243px;top:493px;font-size:13.5px;color:#000;letter-spacing:0.1px">Veranstaltungen</div>
<svg class="r" style="left:964px;top:489px;" width="20" height="20" viewBox="0 0 20 20"><rect x="2" y="3" width="15" height="14.6" fill="#7b48a8"/><rect x="4" y="4.3" width="11" height="6.2" fill="#fff"/><rect x="6" y="6.2" width="7" height="1" fill="#999"/><rect x="6" y="8.2" width="7" height="1" fill="#999"/><rect x="4.8" y="12.7" width="9" height="4.2" fill="#fff"/><rect x="6.9" y="13.6" width="2.1" height="3.3" fill="#5a3a78"/></svg>
<div class="r" style="left:239px;top:517px;width:747px;height:78px;background:#fff;"></div>
<div class="t" style="left:240px;top:525px;font-size:14px;color:#000;letter-spacing:0.14px">13.09.2023 20:51:16: Backup jobs are loaded.</div>
<div class="t" style="left:240px;top:552px;font-size:14px;color:#000;letter-spacing:0.12px">13.09.2023 20:51:19: Starting the "My Software Settings" backup.</div>
<div class="t" style="left:5.5px;top:609px;font-size:14.5px;color:#000;letter-spacing:0.17px">Arbeitsplätze: 3</div>
<div class="r" style="left:130px;top:601px;width:1px;height:28px;background:#c5d0dc;"></div>
<div class="t" style="left:134px;top:609px;font-size:14.5px;color:#000;">Betrieb: 1</div>
<div class="r" style="left:217px;top:601px;width:1px;height:28px;background:#c5d0dc;"></div>
<div class="t" style="left:221.5px;top:609px;font-size:14.5px;color:#000;letter-spacing:0.2px">Abgesagt: 0</div>
<div class="t" style="left:812.5px;top:609px;font-size:14.5px;color:#000;letter-spacing:-0.1px">Version: 3.6.0 (Build 422)</div>
<div class="r" style="left:987px;top:617px;width:2px;height:2px;background:#c0c8d2;"></div>
<div class="r" style="left:983px;top:621px;width:2px;height:2px;background:#c0c8d2;"></div>
<div class="r" style="left:987px;top:621px;width:2px;height:2px;background:#c0c8d2;"></div>
<div class="r" style="left:979px;top:625px;width:2px;height:2px;background:#c0c8d2;"></div>
<div class="r" style="left:983px;top:625px;width:2px;height:2px;background:#c0c8d2;"></div>
<div class="r" style="left:987px;top:625px;width:2px;height:2px;background:#c0c8d2;"></div>
</body></html>
